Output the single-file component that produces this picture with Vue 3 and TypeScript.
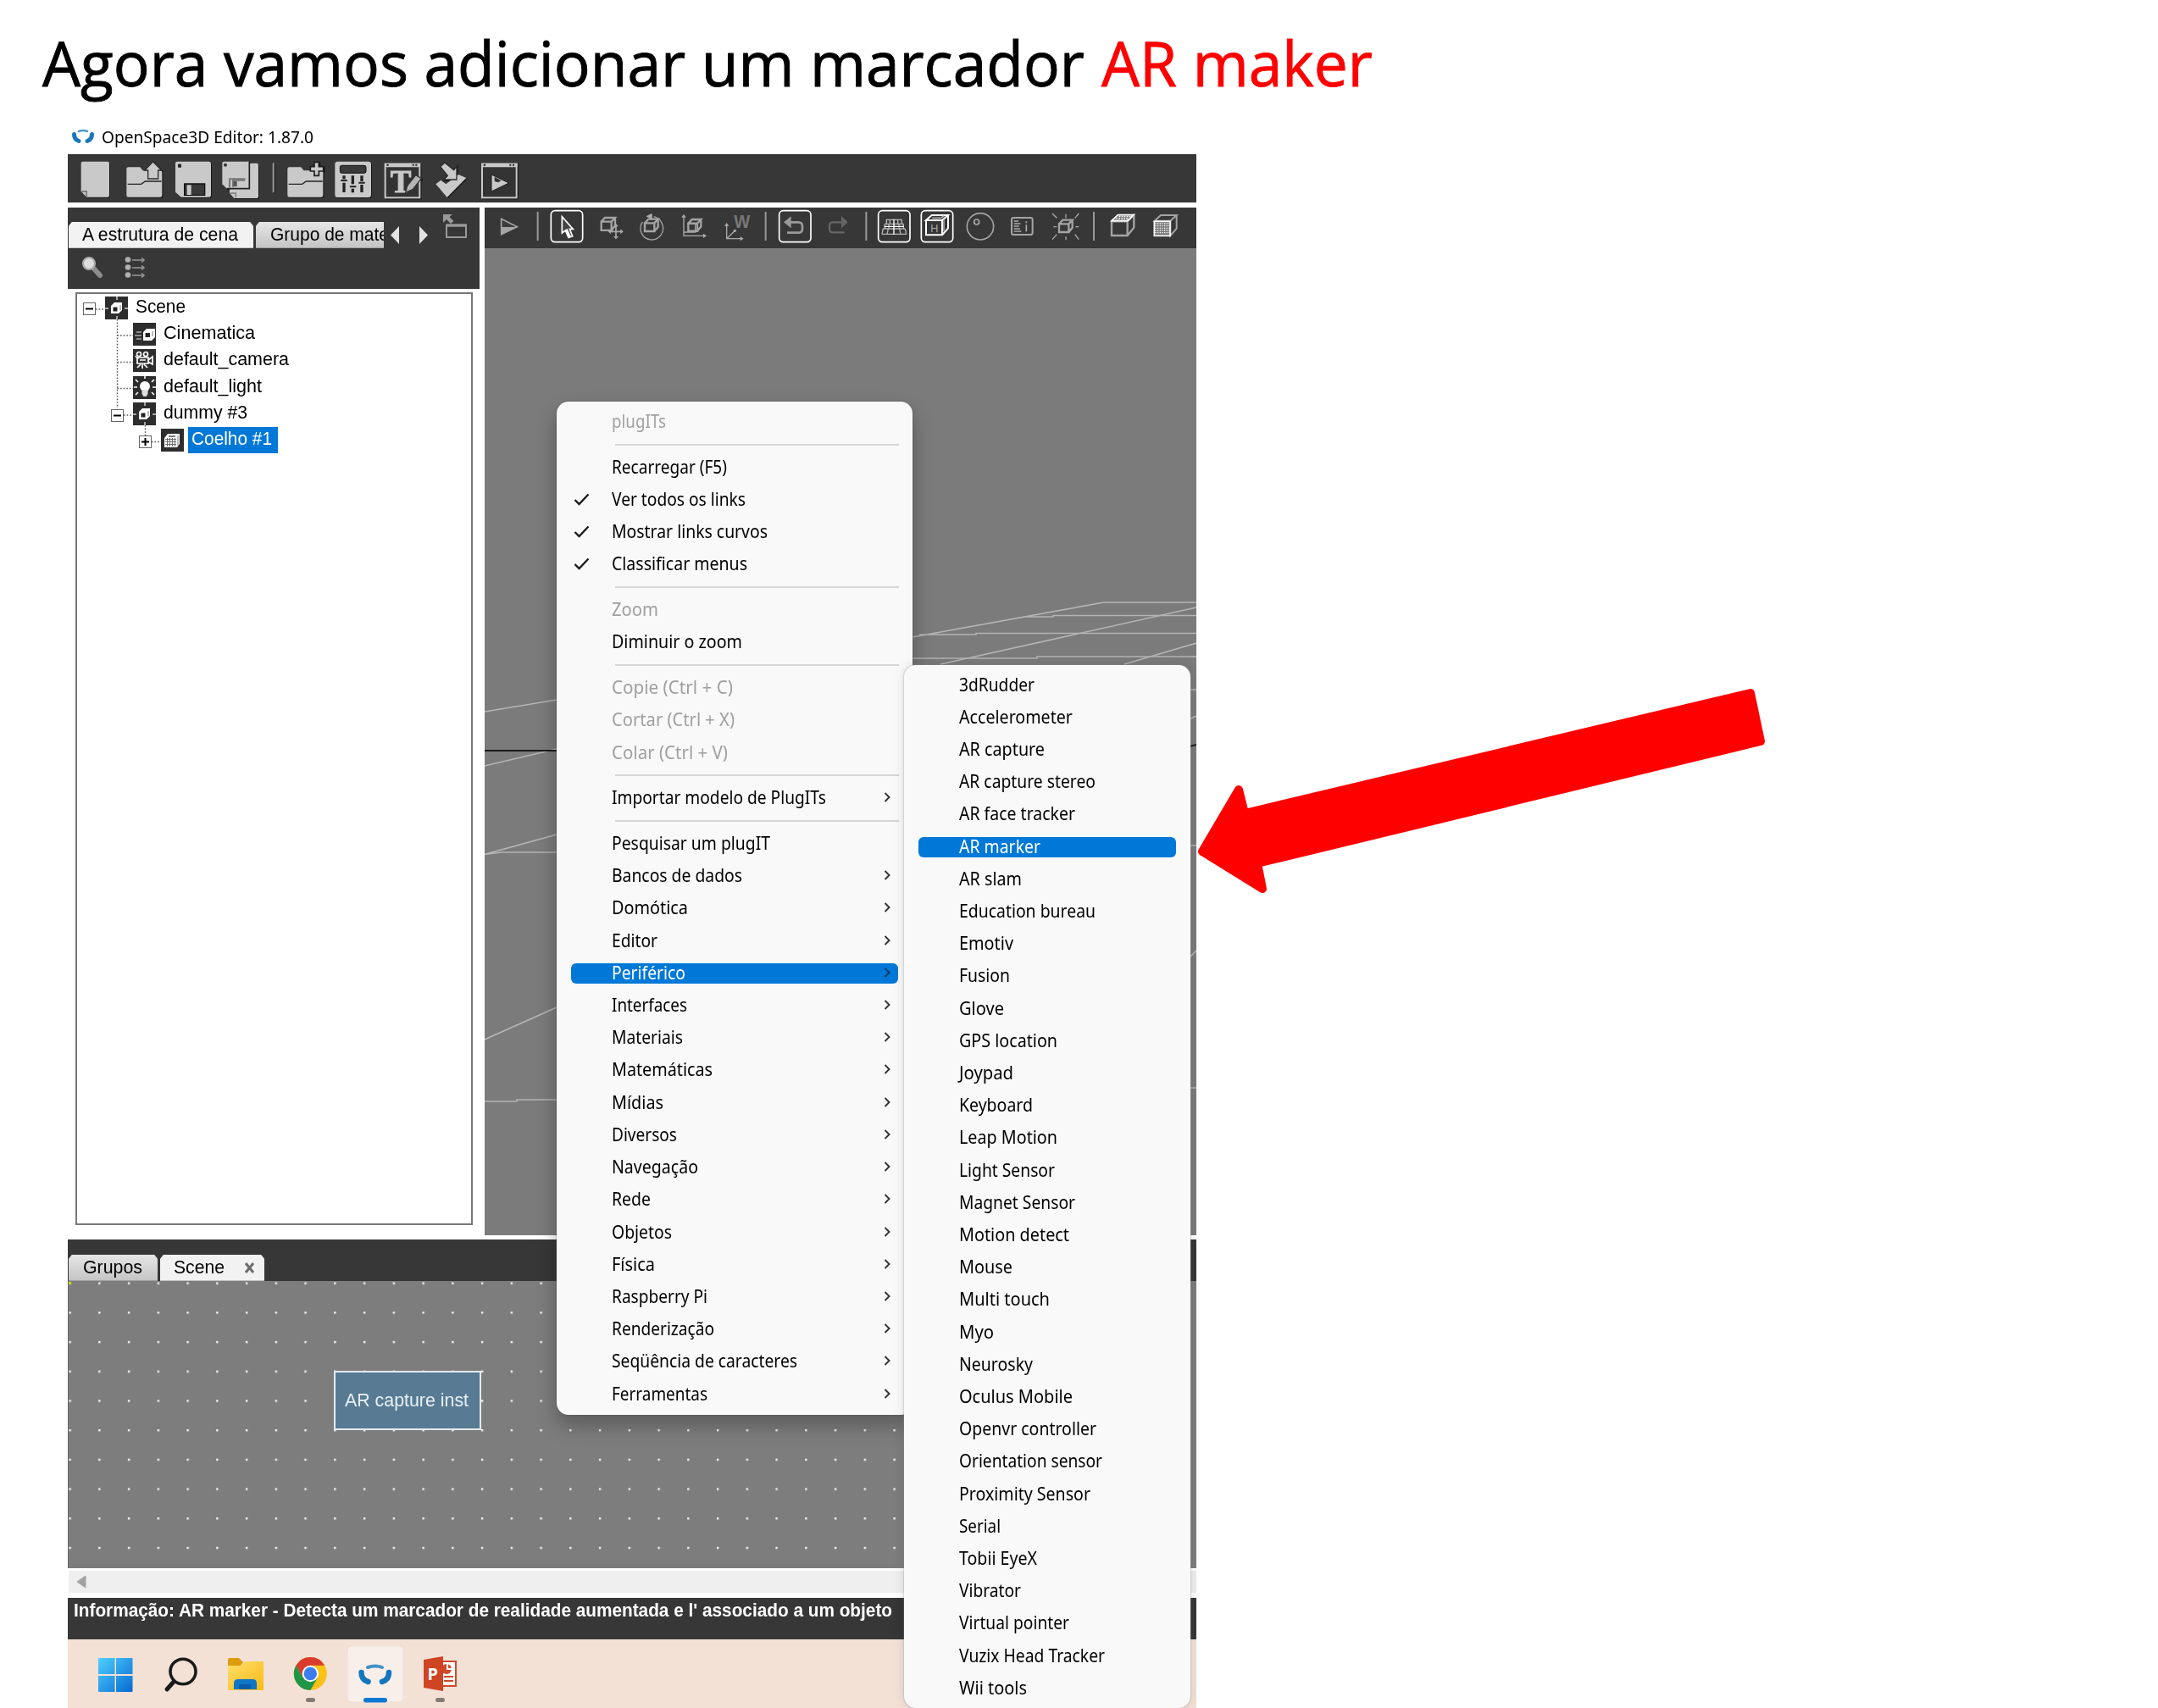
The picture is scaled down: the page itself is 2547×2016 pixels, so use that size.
<script setup lang="ts">
import type { Directive } from 'vue'

interface Glyph { from: number; to: number; body: string }
interface MenuItem { label?: string; w?: number; sub?: boolean; check?: boolean; off?: boolean; on?: boolean }
interface TreeRow { label: string; w: number; level: number; icon: string; box?: string; on?: boolean }

// Squeezes a label horizontally so that it takes exactly the given width.
const vFit: Directive<HTMLElement, number> = {
  mounted(el, { value }) {
    const natural = el.getBoundingClientRect().width
    if (natural > 0) el.style.transform = `scaleX(${value / natural})`
  },
}

const G = '#c9c9c9'
const D = '#2b2b2b'
const sep = (x: number, a: number, b: number) => `<path d="M${x} ${a}V${b}" stroke="#999" stroke-width="6"/>`
const folder = (x: number) =>
  `<path d="M${x} 58q0-6 6-6h42l10 12h62q6 0 6 6v80q0 8-7 8h-112q-7 0-7-8z" fill="${G}"/><path d="M${x + 4} 112h48l14-10h58" fill="none" stroke="#222" stroke-width="4"/>`

const mainIcons: Glyph[] = [
  { from: 15, to: 190, body: `<path d="M62 38q0-6 6-6h88q6 0 6 6v114q0 6-6 6H82L62 138z" fill="${G}"/><path d="M64 138h18v18" fill="none" stroke="#666" stroke-width="4"/>` },
  { from: 190, to: 375, body: folder(224) + `<path d="M318 32l30 31h-12v30h-36v-30h-12z" fill="${G}" stroke="${D}" stroke-width="4"/>` },
  { from: 375, to: 540, body: `<path d="M396 38q0-6 6-6h112q8 0 8 8v110q0 8-8 8h-98l-20-18z" fill="${G}"/><rect x="405" y="41" width="12" height="12" fill="#222"/><path d="M428 111h72v40h-72z" fill="#3a3a3a" stroke="#111" stroke-width="4"/><path d="M437 115h15v35h-15z" fill="${G}"/>` },
  { from: 540, to: 710, body: `<path d="M588 38h96q6 0 6 6v112q0 6-6 6h-80l-16-18z" fill="${G}"/><path d="M562 38q0-6 6-6h90v96h-80l-16-16z" fill="${G}"/><path d="M658 32v96h-80" fill="none" stroke="#222" stroke-width="5"/><path d="M588 124V94h56M600 122v-24h42" stroke="#777" stroke-width="6" fill="none"/><path d="M602 102h12v18h-12z" fill="#555"/><circle cx="573" cy="44" r="6" fill="#333"/><path d="M590 144h20v16" fill="none" stroke="#777" stroke-width="4"/>` },
  { from: 710, to: 770, body: sep(742, 37, 142) },
  { from: 770, to: 940, body: folder(792) + `<path d="M887 34h16v16h16v16h-16v16h-16V66h-14V50h14z" fill="${G}" stroke="#1d1d1d" stroke-width="5"/>` },
  { from: 940, to: 1115, body: `<rect x="962" y="32" width="128" height="127" rx="10" fill="${G}"/><rect x="980" y="46" width="92" height="27" rx="6" fill="#3a3a3a" stroke="#111" stroke-width="3"/><path d="M994 82v12M994 107v34M1025 82v30M1025 128v14M1057 82v20M1057 114v27" stroke="#222" stroke-width="10"/><path d="M983 99h22M1015 121h22M1046 107h22" stroke="#222" stroke-width="6"/>` },
  { from: 1115, to: 1290, body: `<rect x="1138" y="41" width="122" height="119" fill="#333" stroke="${G}" stroke-width="6"/><path d="M1136 38h126v14h-126z" fill="${G}"/><path d="M1143 44h7M1234 44h6M1245 44h6" stroke="#222" stroke-width="6"/><text x="1156" y="142" font-family="Liberation Serif, serif" font-weight="bold" font-size="112" textLength="74" lengthAdjust="spacingAndGlyphs" fill="${G}" stroke="${G}" stroke-width="3">T</text><path d="M1210 142l6-24 30-38 20 12-30 38z" fill="#b5b5b5" stroke="#333" stroke-width="4"/>` },
  { from: 1290, to: 1450, body: `<path d="M1318 112l18-14 18 14 44-34 28 12-68 69z" fill="${G}"/><path d="M1334 50l16-14 32 26 10-14v48h-46l14-14z" fill="${G}" stroke="${D}" stroke-width="4"/>` },
  { from: 1450, to: 1640, body: `<rect x="1483" y="41" width="122" height="119" fill="#333" stroke="${G}" stroke-width="6"/><path d="M1480 38h128v14h-128z" fill="${G}"/><path d="M1488 44h7M1580 44h6M1591 44h6" stroke="#222" stroke-width="6"/><path d="M1516 78l62 30-62 30z" fill="${G}" stroke="#1c1c1c" stroke-width="3"/><path d="M1527 86l24 14-12 6-12-4z" fill="#333"/>` },
]

const frame = (x: number) => `<rect x="${x}" y="26" width="112" height="111" rx="14" fill="none" stroke="#fff" stroke-width="5"/>`
const cube = (x: number, y: number, w: number, c: string, sw = 6) =>
  `<path d="M${x} ${y + 14}h${w}v${w * 0.85}h-${w}zM${x} ${y + 14}l13-14h${w}l-13 14M${x + w + 13} ${y}v${w * 0.8}l-13 ${14 + w * 0.05}" fill="none" stroke="${c}" stroke-width="${sw}"/>`
const M = '#a4a4a4'

const viewIcons: Glyph[] = [
  { from: 6, to: 160, body: `<path d="M65 55v55l56-27z" fill="#3c3c3c" stroke="#a5a5a5" stroke-width="5"/><path d="M66 84h54l-54 25z" fill="#a5a5a5"/>` },
  { from: 160, to: 230, body: sep(195, 30, 132) },
  { from: 230, to: 365, body: frame(240) + `<path d="M279 47v58l12-9 11 25 14-5-10-25h12z" fill="#444" stroke="#fff" stroke-width="5"/><path d="M294 92l12 26" stroke="#fff" stroke-width="9"/>` },
  { from: 365, to: 520, body: cube(418, 51, 36, M, 7) + `<path d="M470 78v44M448 100h44" stroke="#aaa" stroke-width="5"/><path d="M470 72l9 10h-18zM470 127l9-10h-18zM442 100l10-9v18zM496 100l-10-9v18z" fill="#aaa"/>` },
  { from: 520, to: 675, body: cube(574, 56, 34, M, 7) + `<path d="M566 66a40 40 0 1 0 70 8M606 47q24 6 31 30" fill="none" stroke="${M}" stroke-width="4"/><path d="M600 35v22l-22-11z" fill="#aaa"/>` },
  { from: 675, to: 830, body: `<path d="M711 45v70h74M724 73h28v29h-41" fill="none" stroke="#aaa" stroke-width="4"/><path d="M711 38l8 12h-16zM792 115l-12-8v16z" fill="#aaa"/>` + cube(727, 57, 32, M, 7) },
  { from: 830, to: 970, body: `<path d="M862 76v49h54M862 125l30-29" fill="none" stroke="#aaa" stroke-width="4"/><path d="M862 69l8 12h-16zM922 125l-12-8v16z" fill="#aaa"/><circle cx="891" cy="97" r="5" fill="#aaa"/><text x="888" y="86" font-family="Liberation Sans, sans-serif" font-weight="bold" font-size="66" textLength="57" lengthAdjust="spacingAndGlyphs" fill="#777">W</text>` },
  { from: 970, to: 1040, body: sep(1002, 30, 132) },
  { from: 1040, to: 1170, body: frame(1048) + `<path d="M1078 67h38q14 0 14 14v9q0 14-14 14h-40" fill="none" stroke="#999" stroke-width="8"/><path d="M1064 67l26-21v42z" fill="#999"/>` },
  { from: 1170, to: 1310, body: `<path d="M1276 67h-36q-13 0-13 13v10q0 13 13 13h40" fill="none" stroke="#666" stroke-width="7"/><path d="M1292 67l-23-22v43z" fill="#666"/>` },
  { from: 1310, to: 1390, body: sep(1356, 30, 132) },
  { from: 1390, to: 1525, body: frame(1401) + `<path d="M1428 58h58M1424 73h66M1418 90h78M1413 109h88M1430 57v16M1442 57v16M1470 57v16M1484 57v16M1424 73v17M1438 73v17M1474 73v17M1490 73v17M1418 90l-4 19M1436 90l-4 19M1476 90l4 19M1496 90l4 19" stroke="#b5b5b5" stroke-width="4"/><path d="M1456 56v54M1422 82h70" stroke="#fff" stroke-width="4"/>` },
  { from: 1525, to: 1675, body: frame(1553) + `<path d="M1570 60l20-18h58l-21 18zM1570 60h57v52h-57zM1648 42v46l-21 24" fill="none" stroke="#fff" stroke-width="6"/><path d="M1592 52h30l12-8M1633 58v42" stroke="#aaa" stroke-width="5" fill="none"/><text x="1586" y="101" font-family="Liberation Sans, sans-serif" font-size="38" fill="#aaa">H</text>` },
  { from: 1675, to: 1830, body: `<circle cx="1762" cy="82" r="47" fill="none" stroke="${M}" stroke-width="5"/><circle cx="1749" cy="66" r="9" fill="none" stroke="#aaa" stroke-width="5"/>` },
  { from: 1830, to: 1980, body: `<rect x="1872" y="51" width="74" height="60" rx="7" fill="none" stroke="${M}" stroke-width="6"/><path d="M1880 63h16M1880 72h23M1880 81h18M1880 90h22M1880 99h26M1924 64v6M1924 76v24" stroke="#aaa" stroke-width="5"/>` },
  { from: 1980, to: 2140, body: cube(2040, 59, 34, M, 7) + `<path d="M2064 38v14M2064 118v12M2020 83h12M2098 83h12M2016 36l16 16M2110 36l-14 16M2016 128l16-18M2110 128l-14-18" stroke="#aaa" stroke-width="4"/>` },
  { from: 2140, to: 2200, body: sep(2164, 30, 132) },
  { from: 2200, to: 2355, body: `<path d="M2227 64h56v50h-56zM2283 64l23-22v44l-23 28" fill="none" stroke="${M}" stroke-width="7"/><path d="M2227 62l22-21h56l-22 21z" fill="#777" stroke="#fff" stroke-width="5"/><path d="M2243 54h44M2253 47h42" stroke="#fff" stroke-width="4" stroke-dasharray="5 4"/>` },
  { from: 2355, to: 2526, body: `<path d="M2378 62l22-20h56l-22 20zM2434 62v53l22-26V42" fill="none" stroke="${M}" stroke-width="6"/><rect x="2377" y="64" width="56" height="51" fill="#777" stroke="#fff" stroke-width="5"/><path d="M2380 72h50M2380 80h50M2380 88h50M2380 96h50M2380 104h50" stroke="#fff" stroke-width="4" stroke-dasharray="4 4"/>` },
]

const cubeTree = '<path d="M7 11l4-4h9v9l-4 4H7z" fill="#fff"/><path d="M9.500 12.500h5v5h-5z" fill="#222"/><path d="M18 10v6" stroke="#777"/>'
const treeIcons: Record<string, string> = {
  node: cubeTree + '<path d="M14 0v4M14 23v4M0 14h4M23 14h4" stroke="#ccc" stroke-width="1.500"/>',
  cine: '<path d="M12 11l4-4h10v10l-4 4H12z" fill="#fff"/><path d="M14.500 12h5.500v5h-5.500z" fill="#222"/><path d="M23 10v6" stroke="#777"/><path d="M4 11h6M2 15h8M4 19h6" stroke="#aaa" stroke-width="1.500"/>',
  camera: '<g fill="none" stroke="#fff" stroke-width="1.700"><circle cx="7" cy="6" r="2.500"/><circle cx="15" cy="6" r="2.500"/><path d="M5 10h13v7H5zM18 13l5-4v9l-5-3M3 8l3 4M11 18v5M9 18l-4 4M13 18l4 4M8 13h7"/></g>',
  light: '<circle cx="14" cy="12" r="6" fill="#fff"/><path d="M10.500 16h7v5l-2 3h-3l-2-3z" fill="#ddd"/><path d="M14 0v3M1 13h4M23 13h4M3 4l3 3M25 4l-3 3M3 22l3-3M25 22l-3-3" stroke="#fff" stroke-width="1.600"/>',
  mesh: '<path d="M4 11l4-5h14v12l-3 4H4z" fill="#fff"/><path d="M5 12.500h13M5 15.500h13M5 18.500h13M7.500 11v10M10.500 11v10M13.500 11v10M16.500 11v10M20 8v12" stroke="#555" stroke-width=".8"/><path d="M9 9h8" stroke="#222" stroke-width="1.200"/>',
}
const tree: TreeRow[] = [
  { label: 'Scene', w: 59, level: 0, icon: 'node', box: '−' },
  { label: 'Cinematica', w: 108, level: 1, icon: 'cine' },
  { label: 'default_camera', w: 148, level: 1, icon: 'camera' },
  { label: 'default_light', w: 116, level: 1, icon: 'light' },
  { label: 'dummy #3', w: 99, level: 1, icon: 'node', box: '−' },
  { label: 'Coelho #1', w: 95, level: 2, icon: 'mesh', box: '+', on: true },
]

const menu: MenuItem[] = [
  { label: 'plugITs', w: 64, off: true }, {},
  { label: 'Recarregar (F5)', w: 136 },
  { label: 'Ver todos os links', w: 158, check: true },
  { label: 'Mostrar links curvos', w: 184, check: true },
  { label: 'Classificar menus', w: 160, check: true }, {},
  { label: 'Zoom', w: 55, off: true },
  { label: 'Diminuir o zoom', w: 154 }, {},
  { label: 'Copie (Ctrl + C)', w: 143, off: true },
  { label: 'Cortar (Ctrl + X)', w: 145, off: true },
  { label: 'Colar (Ctrl + V)', w: 137, off: true }, {},
  { label: 'Importar modelo de PlugITs', w: 253, sub: true }, {},
  { label: 'Pesquisar um plugIT', w: 187 },
  { label: 'Bancos de dados', w: 154, sub: true },
  { label: 'Domótica', w: 90, sub: true },
  { label: 'Editor', w: 54, sub: true },
  { label: 'Periférico', w: 87, sub: true, on: true },
  { label: 'Interfaces', w: 89, sub: true },
  { label: 'Materiais', w: 84, sub: true },
  { label: 'Matemáticas', w: 119, sub: true },
  { label: 'Mídias', w: 61, sub: true },
  { label: 'Diversos', w: 77, sub: true },
  { label: 'Navegação', w: 102, sub: true },
  { label: 'Rede', w: 46, sub: true },
  { label: 'Objetos', w: 71, sub: true },
  { label: 'Física', w: 51, sub: true },
  { label: 'Raspberry Pi', w: 113, sub: true },
  { label: 'Renderização', w: 121, sub: true },
  { label: 'Seqüência de caracteres', w: 219, sub: true },
  { label: 'Ferramentas', w: 113, sub: true },
]

const submenu: [string, number][] = [
  ['3dRudder', 89], ['Accelerometer', 134], ['AR capture', 101], ['AR capture stereo', 161],
  ['AR face tracker', 137], ['AR marker', 96], ['AR slam', 74], ['Education bureau', 161],
  ['Emotiv', 64], ['Fusion', 60], ['Glove', 53], ['GPS location', 116], ['Joypad', 64],
  ['Keyboard', 87], ['Leap Motion', 116], ['Light Sensor', 113], ['Magnet Sensor', 137],
  ['Motion detect', 130], ['Mouse', 63], ['Multi touch', 107], ['Myo', 41], ['Neurosky', 87],
  ['Oculus Mobile', 134], ['Openvr controller', 162], ['Orientation sensor', 169],
  ['Proximity Sensor', 155], ['Serial', 49], ['Tobii EyeX', 92], ['Vibrator', 73],
  ['Virtual pointer', 130], ['Vuzix Head Tracker', 172], ['Wii tools', 80],
]
</script>

<template>
  <main class="slide">
    <h1 class="title"><span class="t1"><span v-fit="1230" class="fit">Agora vamos adicionar um marcador</span></span><span v-fit="320" class="fit red">AR maker</span></h1>

    <section class="window">
      <header class="titlebar">
        <svg width="28" height="18" viewBox="0 0 28 18"><g fill="none" stroke="#1878b8" stroke-linecap="round"><path d="M9 3q5-2 10 0" stroke-width="2.500" stroke="#4b9bcb"/><path d="M3.500 6.500q0 6 5.500 8M24.500 6.500q0 6-5.500 8" stroke-width="5"/></g></svg>
        <span v-fit="250" class="fit">OpenSpace3D Editor: 1.87.0</span>
      </header>

      <nav class="main-tools">
        <svg v-for="g in mainIcons" :key="g.from" class="raised" :width="(g.to - g.from) / 3" height="57" :viewBox="`${g.from} 6 ${g.to - g.from} 171`"><g v-html="g.body" /></svg>
      </nav>

      <div class="work">
        <aside class="left">
          <div class="left-head">
            <div class="tabs">
              <div class="tab active scene-tab"><span v-fit="184" class="fit">A estrutura de cena</span></div>
              <div class="tab mat-tab"><span v-fit="140" class="fit">Grupo de mate</span></div>
              <svg class="tab-nav" width="112" height="48" viewBox="453 245 112 48">
                <path d="M471 267v21l-10-10.500zM495 267v21l10-10.500z" fill="#e3e3e3" />
                <path d="M527 266h23v14h-23z" fill="none" stroke="#999" stroke-width="2" /><path d="M526 266h25" stroke="#999" stroke-width="3.500" />
                <path d="M523 253h11l-3.500 3 5 5-3.500 3-5-5-4 4z" fill="#999" />
              </svg>
            </div>
            <svg class="filter" width="486" height="48" viewBox="80 293 486 48">
              <path d="M109 315l9 10" stroke="#8c8c8c" stroke-width="6" stroke-linecap="round" />
              <circle cx="105" cy="311" r="7" fill="#ddd" stroke="#aaa" stroke-width="2" />
              <g stroke="#999" stroke-width="1.600"><path d="M156 307h14M156 316h14M156 325h14" /><path d="M167 304.500l3 2.500-3 2.500M167 313.500l3 2.500-3 2.500M167 322.500l3 2.500-3 2.500" fill="none" /></g>
              <g fill="#b0b0b0"><circle cx="151" cy="306.500" r="3.300" /><circle cx="151" cy="315.500" r="3.300" /><circle cx="151" cy="324.500" r="3.300" /></g>
            </svg>
          </div>
          <div class="tree">
            <svg class="wires" width="120" height="190" viewBox="90 347 120 190"><path d="M113 365h11M138.500 377v105M138.500 396h19M138.500 427.500h19M138.500 458.500h19M146 490h11M171.500 502v13M179 521.500h11" fill="none" stroke="#555" stroke-dasharray="1.600 2" stroke-width="1.500" /></svg>
            <div v-for="r in tree" :key="r.label" class="row" :class="'lv' + r.level">
              <span class="box" :class="{ blank: !r.box }"><svg v-if="r.box" width="11" height="11" viewBox="2 2 11 11"><path :d="r.box === '+' ? 'M3 7.500h9M7.500 3v9' : 'M3 7.500h9'" stroke="#000" stroke-width="2" /></svg></span>
              <svg class="ico" width="27" height="27" viewBox="0 0 27 27"><rect width="27" height="27" fill="#2d2d2d" /><g v-html="treeIcons[r.icon]" /></svg>
              <span class="name" :class="{ on: r.on }"><span v-fit="r.w" class="fit">{{ r.label }}</span></span>
            </div>
          </div>
        </aside>

        <div class="view">
          <div class="view-tools">
            <svg v-for="g in viewIcons" :key="g.from" :width="(g.to - g.from) / 3" height="48" :viewBox="`${g.from} 15 ${g.to - g.from} 144`"><g v-html="g.body" /></svg>
          </div>
          <svg class="scene3d" width="840" height="1165" viewBox="572 293 840 1165">
            <g fill="none" stroke="#b4b4b4" stroke-width="1.700">
              <path d="M1077 752L1303 711H1412M1085 749H1152V747.500H1412M1207 728H1243V726.500H1412M1077 777H1224V775H1412" />
              <path d="M1110 784L1412 717M1327 784L1412 759M572 840L657 826M572 904L657 884M572 1008.500L657 985M572 1008.500L592 1006H657M572 1227L657 1189M572 1300H610V1298H657" />
              <path d="M1404 814h8M1404 849l8-4M1404 998h8M1404 1130l8-8M1404 1284h8" />
            </g>
            <path d="M572 886H657M1404 881L1412 879" stroke="#1c1c1c" stroke-width="2" />
          </svg>
        </div>
      </div>

      <div class="bottom">
        <div class="btabs">
          <div class="tab grp"><span v-fit="70" class="fit">Grupos</span></div>
          <div class="tab active scn"><span class="scn-name"><span v-fit="60" class="fit">Scene</span></span><svg width="13" height="13" viewBox="0 0 13 13"><path d="M2 1l9 11M11 1l-9 11" stroke="#6b6b6b" stroke-width="3" /></svg></div>
        </div>
        <div class="canvas">
          <svg class="dots" width="1332" height="339"><defs><pattern id="dots" x="1.400" y="1.500" width="34.750" height="34.700" patternUnits="userSpaceOnUse"><rect width="2.400" height="2.400" fill="#f4f4f4" /></pattern></defs><rect width="1332" height="339" fill="url(#dots)" /><rect x="1" y="1" width="3" height="3" fill="#c6d800" /></svg>
          <div class="plug"><span v-fit="146" class="fit">AR capture inst</span></div>
        </div>
        <div class="scroll"><svg width="12" height="16"><path d="M11 1v14L1 8z" fill="#a2a2a2" stroke="#a2a2a2" stroke-linejoin="round" /></svg></div>
        <div class="status"><span v-fit="966" class="fit">Informação: AR marker - Detecta um marcador de realidade aumentada e l' associado a um objeto</span></div>
      </div>

      <footer class="taskbar">
        <svg class="task" width="520" height="81" viewBox="80 1935 520 81">
          <defs>
            <linearGradient id="win" x1="116" y1="1957" x2="157" y2="1997" gradientUnits="userSpaceOnUse"><stop stop-color="#4fd0ff" /><stop offset="1" stop-color="#0669d0" /></linearGradient>
            <linearGradient id="fold" x1="0" y1="0" x2="1" y2="1"><stop stop-color="#ffdf6b" /><stop offset="1" stop-color="#fbb914" /></linearGradient>
          </defs>
          <path d="M116 1958q0-1 1-1h18.500v19H116zM137 1957h18.500q1 0 1 1v18H137zM116 1978h19.500v19H117q-1 0-1-1zM137 1978h19.500v18q0 1-1 1H137z" fill="url(#win)" />
          <path d="M205 1985l-8 9" stroke="#1a1a1a" stroke-width="5" stroke-linecap="round" /><ellipse cx="216" cy="1973" rx="15" ry="14.800" fill="none" stroke="#1a1a1a" stroke-width="3.600" />
          <path d="M269 1959q0-2 2-2h11l5 5-4 5h-14z" fill="#dd9b0d" /><path d="M269 1966h15l5-5h22v34h-42z" fill="url(#fold)" /><path d="M276 1994v-7q0-5 5-5h17q5 0 5 5v7z" fill="#0f76c8" /><path d="M282 1988h14v6h-14z" fill="#0b5da9" />
          <g transform="translate(366.300 1975.500)">
            <circle r="19.500" fill="#fbc116" /><path d="M-16.900-9.700A19.500 19.500 0 0 1 16.900-9.700H0L-8.500 5z" fill="#dc3a2c" /><path d="M-16.900-9.700A19.500 19.500 0 0 0 0 19.500L8.500 4.900-8.500 4.900z" fill="#1f9546" /><circle r="9.700" fill="#fff" /><circle r="7.700" fill="#3c7df0" />
          </g>
          <rect x="410" y="1943" width="66" height="66" rx="5" fill="#f8efea" stroke="#ecdfd7" />
          <g fill="none" stroke="#1477bd" stroke-linecap="round"><path d="M434 1968q9-3 17 0" stroke-width="4" stroke="#4391c5" /><path d="M426.500 1974q0 9 8 11M459 1974q0 9-8 11" stroke-width="6.500" /></g>
          <path d="M519 1961h19v29h-19z" fill="#fff" stroke="#d04a2b" stroke-width="2" /><circle cx="527" cy="1970" r="6" fill="#d04a2b" /><path d="M528 1964v6h6" stroke="#fff" stroke-width="2" fill="none" /><path d="M524 1979h11M524 1984h11" stroke="#d04a2b" stroke-width="2" />
          <path d="M500 1959l23-4v41l-23-4z" fill="#cf4423" /><text x="504.500" y="1982.500" font-family="Open Sans, sans-serif" font-weight="bold" font-size="20" textLength="12.500" lengthAdjust="spacingAndGlyphs" fill="#fff">P</text>
          <rect x="361" y="2004" width="11" height="5" rx="2.500" fill="#867a73" /><rect x="429" y="2004" width="28" height="5.500" rx="2.700" fill="#0f78d4" /><rect x="514" y="2004" width="11" height="5" rx="2.500" fill="#867a73" />
        </svg>
      </footer>
    </section>

    <div class="menu ctx">
      <template v-for="(m, i) in menu" :key="i">
        <hr v-if="!m.label" />
        <div v-else class="item" :class="{ off: m.off, on: m.on }">
          <span class="mark"><svg v-if="m.check" width="19" height="15" viewBox="0 0 19 15"><path d="M1.500 8l5 5L17.500 1.500" fill="none" stroke="#1b1b1b" stroke-width="2.400" /></svg></span>
          <span class="lbl"><span v-fit="m.w!" class="fit">{{ m.label }}</span></span>
          <svg v-if="m.sub" class="chev" width="9" height="12" viewBox="0 0 9 12"><path d="M1.500 1l5 5-5 5" fill="none" :stroke="m.on ? '#123a63' : '#333'" stroke-width="1.900" /></svg>
        </div>
      </template>
    </div>

    <div class="menu sub">
      <div v-for="[label, w] in submenu" :key="label" class="item" :class="{ on: label === 'AR marker' }"><span v-fit="w" class="fit">{{ label }}</span></div>
    </div>

    <svg class="arrow" width="690" height="260" viewBox="1405 805 690 260"><path d="M1419 1005L1462 932L1469 960L2066 818L2078 875L1484 1019L1490 1049Z" fill="#f00" stroke="#f00" stroke-width="10" stroke-linejoin="round" /></svg>
  </main>
</template>

<style>
body { margin: 0; background: #fff; }
</style>

<style scoped>
.slide { position: relative; width: 2547px; height: 2016px; overflow: hidden; background: #fff; font-family: "Liberation Sans", sans-serif; font-size: 21.500px; color: #000; }
svg { display: block; flex: none; }
.fit { display: inline-block; flex: none; white-space: pre; transform-origin: 0 50%; }
.title { box-sizing: border-box; display: flex; margin: 0; height: 142px; padding: 23px 0 0 50px; font: 400 73px/102px "Open Sans", sans-serif; -webkit-text-stroke: .9px currentColor; }
.t1 { width: 1250px; flex: none; }
.red { color: #f00; }
.window { display: flex; flex-direction: column; width: 1332px; margin-left: 80px; height: 1874px; }
.titlebar { box-sizing: border-box; display: flex; align-items: center; gap: 8px; height: 40px; padding: 0 0 1px 4px; font: 20.500px "Noto Sans", sans-serif; }
.main-tools { display: flex; height: 57px; background: #373737; }
.raised { filter: drop-shadow(1.500px 1.500px 0 #151515); }
.work { display: flex; gap: 6px; height: 1213px; margin-top: 6px; }
.left { width: 486px; }
.left-head { height: 96px; background: #373737; }
.tabs { display: flex; align-items: flex-end; height: 48px; }
.tab { box-sizing: border-box; height: 31px; line-height: 30px; overflow: hidden; white-space: nowrap; background: linear-gradient(#e6e6e6, #c4c4c4); clip-path: polygon(0 5px, 4px 0, calc(100% - 4px) 0, 100% 5px, 100% 100%, 0 100%); }
.tab.active { background: #f2f2f2; }
.scene-tab { width: 218px; padding-left: 16px; margin-left: 1px; }
.mat-tab { width: 151px; margin-left: 3px; padding-left: 17px; clip-path: polygon(0 5px, 4px 0, 100% 0, 100% 100%, 0 100%); }
.tree { position: relative; box-sizing: border-box; width: 469px; height: 1101px; margin: 4px 0 0 9px; padding-top: 1px; border: 2px solid #777; background: #fff; }
.wires { position: absolute; left: -1px; top: 0; }
.row { display: flex; align-items: center; height: 31.300px; }
.lv0 { padding-left: 7px; }
.lv1 { padding-left: 40px; }
.lv2 { padding-left: 73px; }
.box { box-sizing: border-box; display: flex; align-items: center; justify-content: center; width: 15px; height: 15px; margin-right: 11px; margin-top: 3px; border: 1.500px solid #666; background: #fff; }
.blank { visibility: hidden; }
.ico { position: relative; }
.name { box-sizing: border-box; height: 31px; margin-left: 5px; padding-left: 4px; line-height: 28px; }
.name.on { width: 106px; background: #0078d7; color: #fff; }
.view { width: 840px; background: #7b7b7b; }
.view-tools { display: flex; height: 48px; background: #373737; }
.bottom { margin-top: 5px; height: 472px; }
.btabs { display: flex; align-items: flex-end; gap: 3px; height: 49px; padding-left: 1px; background: #373737; }
.grp { width: 105px; padding-left: 17px; }
.scn { display: flex; align-items: center; width: 123px; padding-left: 16px; }
.scn-name { width: 83px; }
.canvas { position: relative; height: 339px; background: #7d7d7d; box-shadow: inset 1px 0 #666; }
.plug { position: absolute; left: 314px; top: 106px; box-sizing: border-box; width: 174px; height: 70px; padding-left: 11px; border: 2px solid #e2eaf0; background: #587b93; color: #e8f0f6; line-height: 66px; }
.scroll { display: flex; align-items: center; height: 26px; margin: 3px 0 0 1px; padding: 0 0 0 9px; background: #efefef; }
.status { height: 49px; margin-top: 6px; padding-left: 7px; background: #373737; color: #fff; font-weight: 700; line-height: 30px; }
.taskbar { height: 82px; background: #f3e1d6; }
.menu { position: absolute; box-sizing: border-box; background: #f9f9f9; font: 21px "Noto Sans", sans-serif; }
.ctx { left: 657px; top: 474px; width: 420px; height: 1196px; padding-top: 5px; border-radius: 14px; box-shadow: 0 0 2px #555, 0 12px 24px rgba(0, 0, 0, .28); }
.item { box-sizing: border-box; display: flex; align-items: center; height: 38.230px; padding-bottom: 2px; line-height: 36px; }
.off { color: #a0a0a0; }
.on { color: #fff; }
.mark { width: 45px; padding-left: 20px; }
.lbl { width: 321px; }
.ctx .on, .sub .on { position: relative; z-index: 0; }
.ctx .on::before, .sub .on::before { content: ""; position: absolute; z-index: -1; left: 17px; right: 17px; top: 7px; height: 24.500px; border-radius: 6px; background: #0078d7; }
hr { height: 2px; margin: 6.700px 16px 6.800px 69px; border: 0; background: #d7d7d7; }
.sub { left: 1067px; top: 785px; width: 338px; height: 1231px; padding-top: 4.500px; border-radius: 14px; box-shadow: 0 0 2px #999, 0 0 14px rgba(0, 0, 0, .12); }
.sub .item { height: 38.210px; padding-left: 65px; }
.arrow { position: absolute; left: 1405px; top: 805px; }
</style>
